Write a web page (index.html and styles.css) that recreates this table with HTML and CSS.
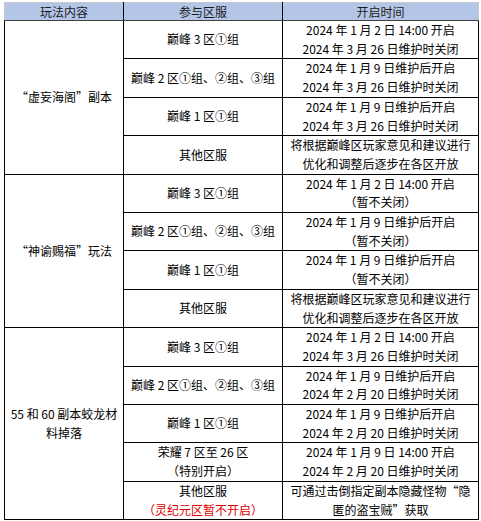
FILE: index.html
```html
<!DOCTYPE html>
<html lang="zh-CN">
<head>
<meta charset="utf-8">
<link rel="stylesheet" href="styles.css">
</head>
<body>
<table class="sched">
<colgroup><col class="c1"><col class="c2"><col class="c3"></colgroup>
<thead>
<tr><th class="first">玩法内容</th><th>参与区服</th><th class="last">开启时间</th></tr>
</thead>
<tbody>
<tr><td class="mode" rowspan="4">“虚妄海阁”副本</td><td>巅峰 3 区①组</td><td>2024 年 1 月 2 日 14:00 开启<br>2024 年 3 月 26 日维护时关闭</td></tr>
<tr><td>巅峰 2 区①组、②组、③组</td><td>2024 年 1 月 9 日维护后开启<br>2024 年 3 月 26 日维护时关闭</td></tr>
<tr><td>巅峰 1 区①组</td><td>2024 年 1 月 9 日维护后开启<br>2024 年 3 月 26 日维护时关闭</td></tr>
<tr><td>其他区服</td><td>将根据巅峰区玩家意见和建议进行<br>优化和调整后逐步在各区开放</td></tr>

<tr><td class="mode" rowspan="4">“神谕赐福”玩法</td><td>巅峰 3 区①组</td><td>2024 年 1 月 2 日 14:00 开启<br>（暂不关闭）</td></tr>
<tr><td>巅峰 2 区①组、②组、③组</td><td>2024 年 1 月 9 日维护后开启<br>（暂不关闭）</td></tr>
<tr><td>巅峰 1 区①组</td><td>2024 年 1 月 9 日维护后开启<br>（暂不关闭）</td></tr>
<tr><td>其他区服</td><td>将根据巅峰区玩家意见和建议进行<br>优化和调整后逐步在各区开放</td></tr>

<tr><td class="mode" rowspan="5">55 和 60 副本蛟龙材<br>料掉落</td><td>巅峰 3 区①组</td><td>2024 年 1 月 2 日 14:00 开启<br>2024 年 3 月 26 日维护时关闭</td></tr>
<tr><td>巅峰 2 区①组、②组、③组</td><td>2024 年 1 月 9 日维护后开启<br>2024 年 2 月 20 日维护时关闭</td></tr>
<tr><td>巅峰 1 区①组</td><td>2024 年 1 月 9 日维护后开启<br>2024 年 2 月 20 日维护时关闭</td></tr>
<tr><td>荣耀 7 区至 26 区<br>（特别开启）</td><td>2024 年 1 月 9 日 14:00 开启<br>2024 年 2 月 20 日维护时关闭</td></tr>
<tr><td>其他区服<br><span class="warn">（灵纪元区暂不开启）</span></td><td>可通过击倒指定副本隐藏怪物“隐<br>匿的盗宝贼”获取</td></tr>
</tbody>
</table>
</body>
</html>
```

FILE: styles.css
```css
html, body {
  margin: 0;
  padding: 0;
  background: #ffffff;
}
body {
  padding: 2px 0 0 4px;
  font-family: "Noto Sans CJK SC", "Liberation Sans", sans-serif;
  font-size: 12px;
  color: #000000;
}
.sched {
  border-collapse: collapse;
  table-layout: fixed;
  width: 474px;
}
.c1 { width: 119px; }
.c2 { width: 159px; }
.c3 { width: 196px; }
.sched th {
  height: 17px;
  padding: 0;
  line-height: 17px;
  font-weight: normal;
  color: #1a1a1a;
  background: #b4c6e7;
  border-top: 1px solid #c8c8c8;
  border-bottom: 1px solid #404040;
  border-left: 1px solid #000000;
  border-right: 1px solid #000000;
  text-align: center;
}
.sched th.first { border-left-color: #c8c8c8; }
.sched th.last { border-right-color: #c8c8c8; }
.sched td {
  border: 1px solid #000000;
  padding: 0 2px;
  line-height: 18.7px;
  height: 37.4px;
  text-align: center;
  vertical-align: middle;
  white-space: nowrap;
}
.warn { color: #e00000; }
```
